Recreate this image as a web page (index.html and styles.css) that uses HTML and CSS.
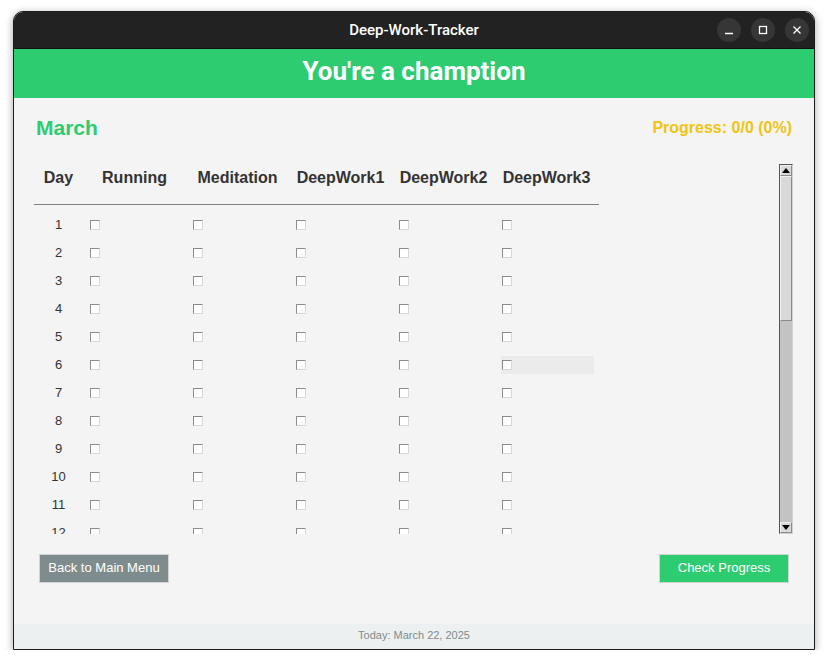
FILE: index.html
```html
<!DOCTYPE html>
<html>
<head>
<meta charset="utf-8">
<link rel="stylesheet" href="styles.css">
</head>
<body>
<div class="window">
  <div class="titlebar">
    <div class="title">Deep-Work-Tracker</div>
    <div class="wbtns">
      <div class="wbtn"><svg width="10" height="10" viewBox="0 0 10 10"><path d="M1 8.5H9" stroke="#fff" stroke-width="1.4"/></svg></div>
      <div class="wbtn"><svg width="10" height="10" viewBox="0 0 10 10"><rect x="1.5" y="1.5" width="7" height="7" fill="none" stroke="#fff" stroke-width="1.3"/></svg></div>
      <div class="wbtn"><svg width="10" height="10" viewBox="0 0 10 10"><path d="M1.5 1.5L8.5 8.5M8.5 1.5L1.5 8.5" stroke="#fff" stroke-width="1.3"/></svg></div>
    </div>
  </div>
  <div class="banner">You're a chamption</div>
  <div class="main">
    <div class="toprow">
      <div class="month">March</div>
      <div class="progress">Progress: 0/0 (0%)</div>
    </div>
    <div class="section">
      <div class="canvas">
        <div class="thead">
          <div class="hday">Day</div>
          <div class="hcol">Running</div>
          <div class="hcol">Meditation</div>
          <div class="hcol">DeepWork1</div>
          <div class="hcol">DeepWork2</div>
          <div class="hcol">DeepWork3</div>
        </div>
        <div class="rule"></div>
        <div class="rows" id="rows"></div>
      </div>
      <div class="scrollbar">
        <div class="arrow"><svg width="8" height="5" viewBox="0 0 8 5"><path d="M0 5L4 0L8 5Z" fill="#000"/></svg></div>
        <div class="trough">
          <div class="thumb"></div>
        </div>
        <div class="arrow"><svg width="8" height="5" viewBox="0 0 8 5"><path d="M0 0L4 5L8 0Z" fill="#000"/></svg></div>
      </div>
    </div>
    <div class="buttons">
      <div class="btn back">Back to Main Menu</div>
      <div class="btn check">Check Progress</div>
    </div>
  </div>
  <div class="footer">Today: March 22, 2025</div>
</div>
<script>
  var rows = document.getElementById('rows');
  var html = '';
  for (var d = 1; d <= 31; d++) {
    html += '<div class="row"><div class="dnum">' + d + '</div>';
    for (var c = 0; c < 5; c++) {
      var hl = (d === 6 && c === 4) ? ' active' : '';
      html += '<div class="cell"><div class="cb' + hl + '"><span class="box"></span></div></div>';
    }
    html += '</div>';
  }
  rows.innerHTML = html;
</script>
</body>
</html>
```
FILE: styles.css
```css
* { box-sizing: border-box; }
html, body { margin: 0; padding: 0; background: #ffffff; }
body { font-family: "Liberation Sans", Arial, sans-serif; }

.window {
  margin: 11px 0 0 13px;
  width: 802px;
  height: 639px;
  border: 1px solid #1c1c1c;
  border-radius: 10px 10px 0 0;
  overflow: hidden;
  display: flex;
  flex-direction: column;
  box-shadow: 0 2px 8px rgba(0,0,0,0.35);
  background: #f4f4f4;
}

.titlebar {
  height: 37px;
  flex: none;
  background: #222222;
  position: relative;
  display: flex;
  align-items: center;
  justify-content: center;
  border-bottom: 1px solid #111;
}
.title {
  color: #ffffff;
  font-family: Roboto, "Noto Sans", sans-serif;
  font-weight: 500;
  font-size: 15px;
}
.wbtns {
  position: absolute;
  right: 5px;
  top: 6px;
  display: flex;
  gap: 10px;
}
.wbtn {
  width: 24px;
  height: 24px;
  border-radius: 50%;
  background: #363636;
  display: flex;
  align-items: center;
  justify-content: center;
}

.banner {
  height: 49px;
  flex: none;
  background: #2ecc71;
  color: #ffffff;
  font-family: Roboto, "Liberation Sans", sans-serif;
  font-weight: 700;
  font-size: 26px;
  display: flex;
  align-items: center;
  justify-content: center;
  padding-bottom: 5px;
}

.main {
  flex: 1;
  display: flex;
  flex-direction: column;
  padding: 18px 21px 0 20px;
}
.toprow {
  height: 24px;
  display: flex;
  align-items: center;
  justify-content: space-between;
}
.month {
  color: #2ecc71;
  font-weight: 700;
  font-size: 21px;
  padding-left: 2px;
}
.progress {
  color: #f1c40f;
  font-weight: 700;
  font-size: 16px;
  padding-right: 1px;
}

.section {
  margin-top: 24px;
  height: 371px;
  display: flex;
}
.canvas {
  flex: 1;
  display: flex;
  flex-direction: column;
}
.thead {
  height: 26px;
  padding-top: 2px;
  display: flex;
  align-items: center;
  font-weight: 700;
  font-size: 16px;
  color: #333333;
}
.hday { width: 49px; text-align: center; }
.hcol { width: 103px; text-align: center; }
.rule {
  margin-top: 14px;
  width: 565px;
  height: 1px;
  border-top: 1px solid #808080;
  flex: none;
}
.rows {
  height: 329px;
  overflow: hidden;
  padding-top: 11px;
  display: flex;
  flex-direction: column;
  gap: 10px;
}
.row {
  height: 18px;
  flex: none;
  display: flex;
  align-items: center;
}
.dnum {
  width: 49px;
  text-align: center;
  font-size: 13px;
  color: #333333;
  margin-top: -1px;
}
.cell {
  width: 103px;
  padding-left: 6px;
}
.cb {
  width: 93px;
  height: 18px;
  display: flex;
  align-items: center;
  padding-left: 1px;
}
.cb.active { background: #ebebeb; }
.box {
  width: 10px;
  height: 10px;
  background: #ffffff;
  border-top: 1px solid #8c8c8c;
  border-left: 1px solid #8c8c8c;
  border-right: 1px solid #d8d8d8;
  border-bottom: 1px solid #d8d8d8;
}

.scrollbar {
  width: 14px;
  height: 370px;
  display: flex;
  flex-direction: column;
  border: 1px solid #555555;
  border-right-color: #d0d0d0;
  border-bottom-color: #d0d0d0;
  background: #c3c3c3;
}
.arrow {
  height: 11px;
  flex: none;
  background: #d9d9d9;
  border: 1px solid #f0f0f0;
  border-right-color: #8a8a8a;
  border-bottom-color: #8a8a8a;
  display: flex;
  align-items: center;
  justify-content: center;
}
.trough {
  flex: 1;
  background: #c3c3c3;
}
.thumb {
  height: 145px;
  background: #d9d9d9;
  border: 1px solid #f0f0f0;
  border-right-color: #8a8a8a;
  border-bottom-color: #8a8a8a;
}

.buttons {
  margin-top: 19px;
  display: flex;
  justify-content: space-between;
  padding: 0 4px 0 5px;
}
.btn {
  width: 130px;
  height: 29px;
  border: 1px solid #d3d3d3;
  color: #ffffff;
  font-size: 13px;
  display: flex;
  align-items: center;
  justify-content: center;
  padding-bottom: 2px;
}
.back { background: #7f8c8d; }
.check { background: #2ecc71; }

.footer {
  height: 25px;
  flex: none;
  background: #ecf0f1;
  color: #7f8c8d;
  font-size: 11px;
  display: flex;
  align-items: center;
  justify-content: center;
  padding-bottom: 3px;
}
```
